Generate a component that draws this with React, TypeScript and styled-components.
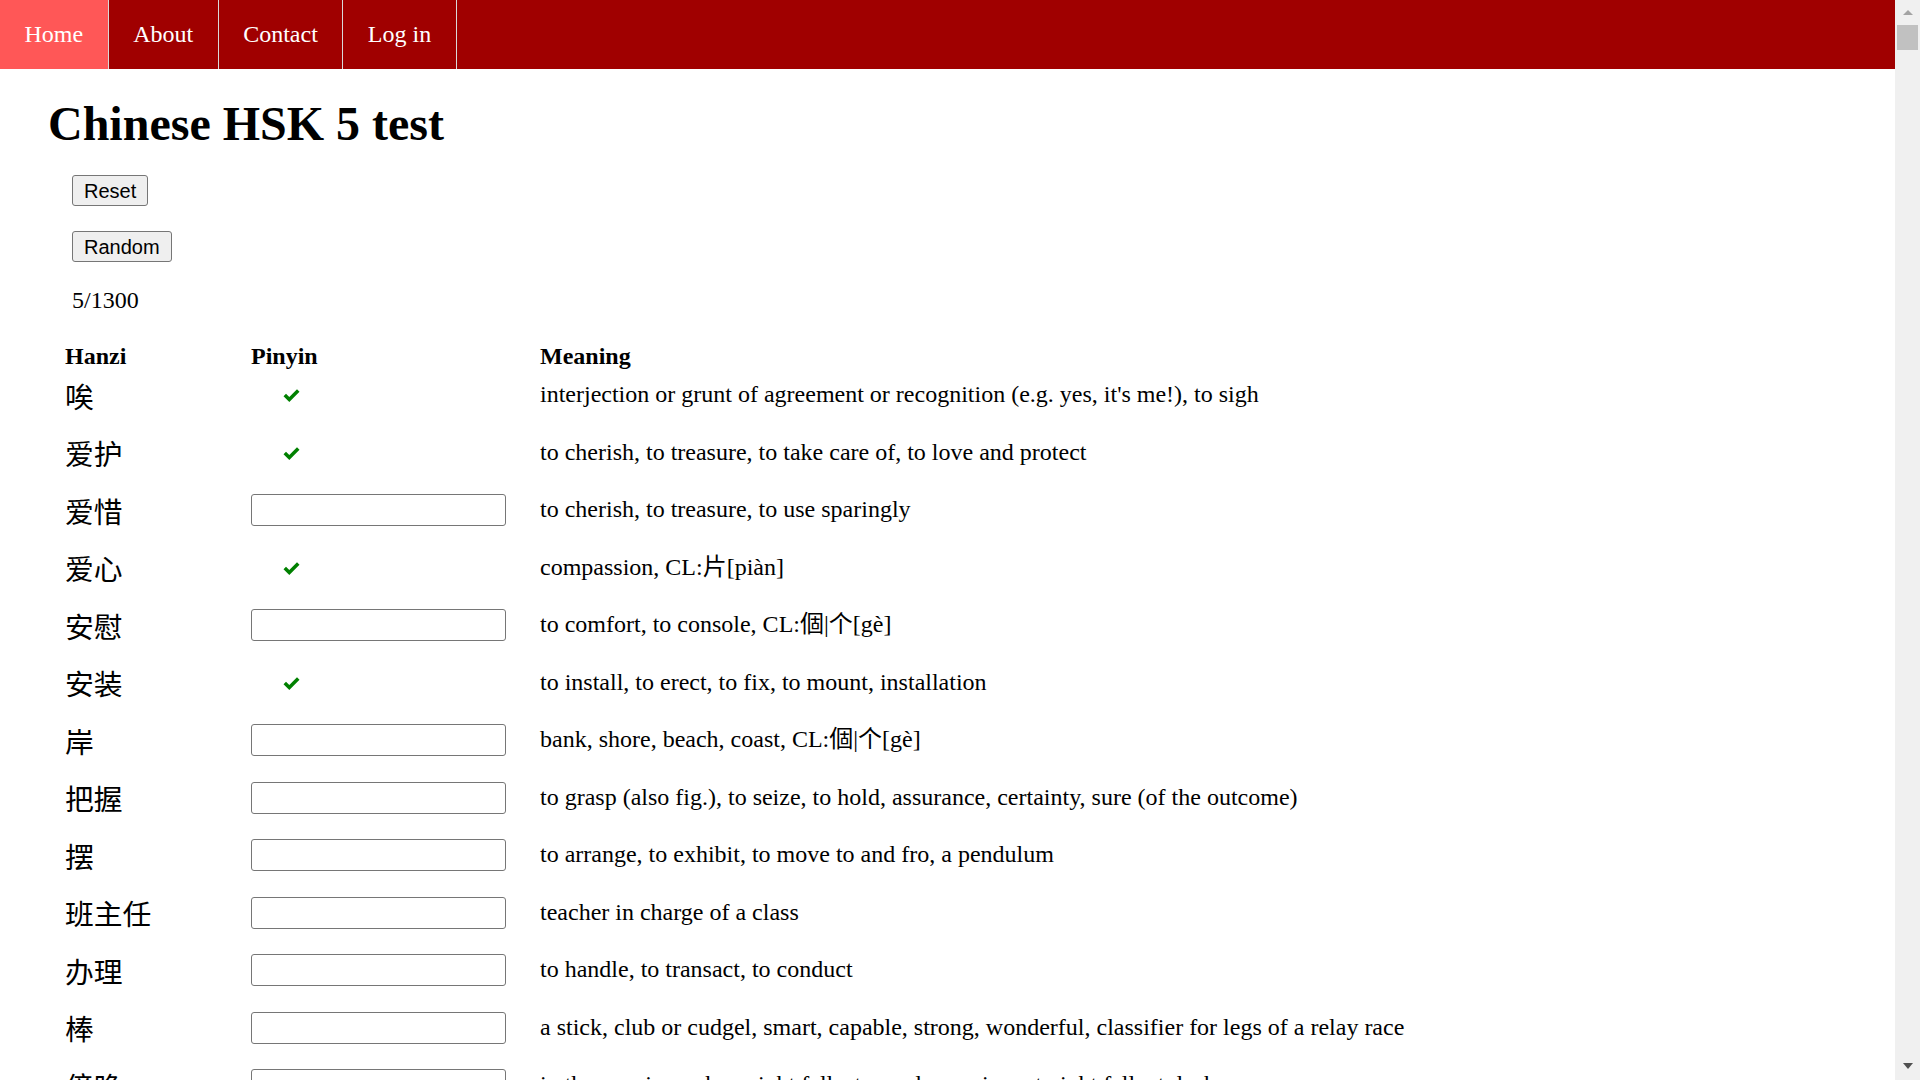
import React from "react";
import styled, { createGlobalStyle } from "styled-components";

const GlobalStyle = createGlobalStyle`
  html, body {
    margin: 0;
    padding: 0;
    height: 100%;
    overflow: hidden;
    background: #ffffff;
  }
  body {
    font-family: "Liberation Serif", "Noto Sans CJK SC", serif;
    color: #000000;
  }
  * { box-sizing: border-box; }
`;

const Viewport = styled.div`
  display: flex;
  height: 100vh;
  width: 100vw;
  overflow: hidden;
`;

const Page = styled.div`
  flex: 1;
  min-width: 0;
  overflow: hidden;
`;

const NavBar = styled.ul`
  display: flex;
  margin: 0;
  padding: 0;
  list-style: none;
  height: 69px;
  background: #a00000;
`;

const NavItem = styled.li<{ $active?: boolean }>`
  display: flex;
  align-items: center;
  padding: 0 24.5px;
  height: 100%;
  border-right: 1px solid #d9d9d9;
  background: ${(p) => (p.$active ? "#ff5757" : "transparent")};
  color: #ffffff;
  font-family: "Liberation Serif", serif;
  font-size: 24px;
  cursor: pointer;
`;

const Main = styled.main`
  padding: 27px 0 0 48px;
`;

const Title = styled.h1`
  margin: 0 0 24px;
  font-family: "Liberation Serif", serif;
  font-size: 48px;
  line-height: 55px;
  font-weight: bold;
`;

const Controls = styled.div`
  display: flex;
  flex-direction: column;
  align-items: flex-start;
  gap: 25px;
  padding-left: 24px;
`;

const Button = styled.button`
  height: 31px;
  padding: 0 11px;
  border: 1px solid #767676;
  border-radius: 3px;
  background: #efefef;
  color: #000000;
  font-family: "Liberation Sans", Arial, sans-serif;
  font-size: 20px;
  line-height: 1;
  cursor: pointer;
`;

const Counter = styled.div`
  margin-top: 25px;
  padding-left: 24px;
  font-size: 24px;
  line-height: 27.6px;
`;

const WordTable = styled.div`
  display: grid;
  grid-template-columns: 186px 289px 1fr;
  grid-template-rows: 24px;
  grid-auto-rows: 57.5px;
  align-items: center;
  margin-top: 28px;
  padding-left: 17px;
`;

const HeaderCell = styled.div`
  align-self: start;
  font-weight: bold;
  font-size: 24px;
  line-height: 27.6px;
`;

const HanziCell = styled.div`
  font-family: "Noto Sans CJK SC", sans-serif;
  font-size: 28.8px;
  line-height: 36px;
  margin-top: 1px;
`;

const PinyinCell = styled.div`
  display: flex;
  align-items: center;
`;

const PinyinInput = styled.input`
  width: 255px;
  height: 32px;
  border: 1px solid #767676;
  border-radius: 3px;
  background: #ffffff;
  font-size: 20px;
  padding: 0 4px;
`;

const Check = styled.svg`
  margin-left: 32px;
  margin-top: 2px;
  width: 17px;
  height: 14px;
`;

const MeaningCell = styled.div`
  font-size: 24px;
  line-height: 27.6px;
  white-space: nowrap;
  margin-top: -1px;
`;

const ScrollTrack = styled.div`
  width: 25px;
  flex: none;
  display: flex;
  flex-direction: column;
  align-items: center;
  background: #f0f0f0;
`;

const ScrollButton = styled.div<{ $down?: boolean; $enabled?: boolean }>`
  height: 25px;
  width: 100%;
  display: flex;
  justify-content: center;
  align-items: flex-start;
  padding-top: ${(p) => (p.$down ? "8px" : "10px")};
  &::after {
    content: "";
    width: 0;
    height: 0;
    border-left: 5.5px solid transparent;
    border-right: 5.5px solid transparent;
    ${(p) =>
      p.$down
        ? `border-top: 6px solid ${p.$enabled ? "#505050" : "#a3a3a3"};`
        : `border-bottom: 5px solid ${p.$enabled ? "#505050" : "#a3a3a3"};`}
  }
`;

const ScrollThumb = styled.div`
  width: 21px;
  height: 25px;
  background: #c1c1c1;
`;

const ScrollSpacer = styled.div`
  flex: 1;
`;

type Row = { hanzi: string; done: boolean; meaning: string };

const rows: Row[] = [
  { hanzi: "唉", done: true, meaning: "interjection or grunt of agreement or recognition (e.g. yes, it's me!), to sigh" },
  { hanzi: "爱护", done: true, meaning: "to cherish, to treasure, to take care of, to love and protect" },
  { hanzi: "爱惜", done: false, meaning: "to cherish, to treasure, to use sparingly" },
  { hanzi: "爱心", done: true, meaning: "compassion, CL:片[piàn]" },
  { hanzi: "安慰", done: false, meaning: "to comfort, to console, CL:個|个[gè]" },
  { hanzi: "安装", done: true, meaning: "to install, to erect, to fix, to mount, installation" },
  { hanzi: "岸", done: false, meaning: "bank, shore, beach, coast, CL:個|个[gè]" },
  { hanzi: "把握", done: false, meaning: "to grasp (also fig.), to seize, to hold, assurance, certainty, sure (of the outcome)" },
  { hanzi: "摆", done: false, meaning: "to arrange, to exhibit, to move to and fro, a pendulum" },
  { hanzi: "班主任", done: false, meaning: "teacher in charge of a class" },
  { hanzi: "办理", done: false, meaning: "to handle, to transact, to conduct" },
  { hanzi: "棒", done: false, meaning: "a stick, club or cudgel, smart, capable, strong, wonderful, classifier for legs of a relay race" },
  { hanzi: "傍晚", done: false, meaning: "in the evening, when night falls, towards evening, at night fall, at dusk" },
  { hanzi: "包裹", done: false, meaning: "to wrap up, to bind up, bundle, parcel, package, CL:個|个[gè]" },
  { hanzi: "包含", done: false, meaning: "to contain, to embody, to include" },
];

const CheckIcon = () => (
  <Check viewBox="0 0 17 14" aria-hidden="true">
    <path d="M0.5 7.2 L3 4.7 L6.3 8 L14 0.3 L16.5 2.8 L6.3 13 Z" fill="#008000" />
  </Check>
);

export default function App() {
  return (
    <>
      <GlobalStyle />
      <Viewport>
        <Page>
          <NavBar>
            <NavItem $active>Home</NavItem>
            <NavItem>About</NavItem>
            <NavItem>Contact</NavItem>
            <NavItem>Log in</NavItem>
          </NavBar>
          <Main>
            <Title>Chinese HSK 5 test</Title>
            <Controls>
              <Button>Reset</Button>
              <Button>Random</Button>
            </Controls>
            <Counter>5/1300</Counter>
            <WordTable>
              <HeaderCell>Hanzi</HeaderCell>
              <HeaderCell>Pinyin</HeaderCell>
              <HeaderCell>Meaning</HeaderCell>
              {rows.map((r) => (
                <React.Fragment key={r.hanzi}>
                  <HanziCell>{r.hanzi}</HanziCell>
                  <PinyinCell>{r.done ? <CheckIcon /> : <PinyinInput type="text" />}</PinyinCell>
                  <MeaningCell>{r.meaning}</MeaningCell>
                </React.Fragment>
              ))}
            </WordTable>
          </Main>
        </Page>
        <ScrollTrack>
          <ScrollButton />
          <ScrollThumb />
          <ScrollSpacer />
          <ScrollButton $down $enabled />
        </ScrollTrack>
      </Viewport>
    </>
  );
}
